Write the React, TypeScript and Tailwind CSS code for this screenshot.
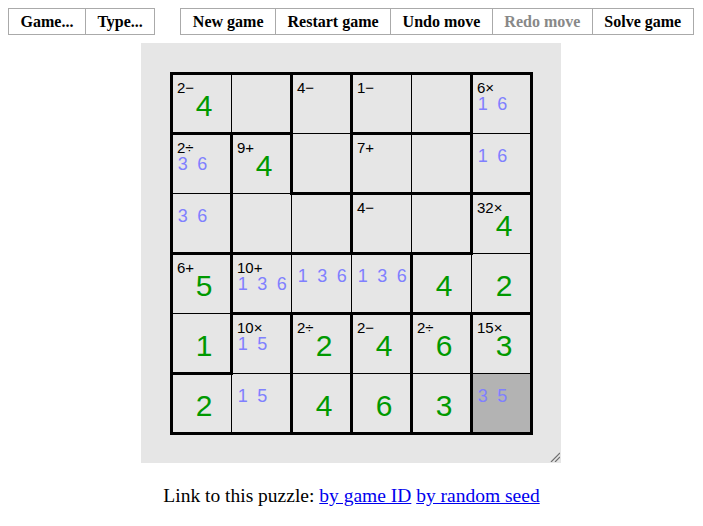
import React from "react";

// cage membership per row, one letter per cage
const CAGES = ["AABCCD", "EFBGGD", "EFFHHI", "JKKKII", "JLMNOP", "LLMNOP"];
const VALUES = ["4.....", ".4....", ".....4", "5...42", "1.2463", "2.463."];

const CLUES: Record<string, string> = {
  "0,0": "2−",
  "0,2": "4−",
  "0,3": "1−",
  "0,5": "6×",
  "1,0": "2÷",
  "1,1": "9+",
  "1,3": "7+",
  "2,3": "4−",
  "2,5": "32×",
  "3,0": "6+",
  "3,1": "10+",
  "4,1": "10×",
  "4,2": "2÷",
  "4,3": "2−",
  "4,4": "2÷",
  "4,5": "15×",
};

const MARKS: Record<string, number[]> = {
  "0,5": [1, 6],
  "1,0": [3, 6],
  "1,5": [1, 6],
  "2,0": [3, 6],
  "3,1": [1, 3, 6],
  "3,2": [1, 3, 6],
  "3,3": [1, 3, 6],
  "4,1": [1, 5],
  "5,1": [1, 5],
  "5,5": [3, 5],
};

function thinPath() {
  let d = "";
  for (let i = 1; i < 6; i++) {
    const p = i * 60 + 0.5;
    d += `M${p} 0V360M0 ${p}H360`;
  }
  return d;
}

function thickPath() {
  let d = "";
  for (let r = 0; r < 6; r++) {
    for (let c = 0; c < 6; c++) {
      if (c < 5 && CAGES[r][c] !== CAGES[r][c + 1]) {
        const x = (c + 1) * 60 + 0.5;
        d += `M${x} ${r * 60 + 0.5}V${(r + 1) * 60 + 0.5}`;
      }
      if (r < 5 && CAGES[r][c] !== CAGES[r + 1][c]) {
        const y = (r + 1) * 60 + 0.5;
        d += `M${c * 60 + 0.5} ${y}H${(c + 1) * 60 + 0.5}`;
      }
    }
  }
  return d;
}

function Cell({ r, c }: { r: number; c: number }) {
  const key = `${r},${c}`;
  const clue = CLUES[key];
  const marks = MARKS[key];
  const v = VALUES[r][c];
  const highlight = r === 5 && c === 5;

  return (
    <div className={`grid h-[60px] w-[60px] ${highlight ? "bg-[#b3b3b3]" : ""}`}>
      {clue && (
        <span className="col-start-1 row-start-1 ml-[6px] mt-[7px] self-start justify-self-start text-[15px] leading-[15px] text-black">
          {clue}
        </span>
      )}
      {marks && (
        <div
          className={`col-start-1 row-start-1 ml-[2px] flex self-start justify-self-start text-[18px] leading-[18px] text-[#8080ff] ${
            clue ? "mt-[22px]" : "mt-[14px]"
          }`}
        >
          {marks.map((m) => (
            <span key={m} className="w-[19.5px] text-center">
              {m}
            </span>
          ))}
        </div>
      )}
      {v !== "." && (
        <span className="col-start-1 row-start-1 ml-[6px] mt-[6px] self-center justify-self-center text-[30px] leading-[34px] text-[#009900]">
          {v}
        </span>
      )}
    </div>
  );
}

function MenuGroup({ items }: { items: { label: string; disabled?: boolean }[] }) {
  return (
    <div className="flex divide-x divide-[#aaaaaa] border border-[#aaaaaa]">
      {items.map((it) => (
        <span
          key={it.label}
          className={`px-[11.5px] py-[3px] leading-[19px] ${it.disabled ? "text-[#888888]" : "text-black"}`}
        >
          {it.label}
        </span>
      ))}
    </div>
  );
}

export default function App() {
  return (
    <div className="min-h-[526px] w-full bg-white pt-2">
      <div className="flex gap-[25px] pl-2 font-['Liberation_Serif',serif] text-[16px] font-bold">
        <MenuGroup items={[{ label: "Game..." }, { label: "Type..." }]} />
        <MenuGroup
          items={[
            { label: "New game" },
            { label: "Restart game" },
            { label: "Undo move" },
            { label: "Redo move", disabled: true },
            { label: "Solve game" },
          ]}
        />
      </div>

      <div className="relative ml-[141px] mt-2 h-[420px] w-[420px] bg-[#e6e6e6] p-[30px] font-['Liberation_Sans',sans-serif]">
        <div className="relative grid grid-cols-[repeat(6,60px)] grid-rows-[repeat(6,60px)]">
          {CAGES.map((row, r) =>
            row.split("").map((_, c) => <Cell key={`${r}-${c}`} r={r} c={c} />)
          )}
          <svg
            className="pointer-events-none absolute left-0 top-0 overflow-visible"
            width="360"
            height="360"
            shapeRendering="crispEdges"
          >
            <path d={thinPath()} stroke="#000" strokeWidth="1" fill="none" />
            <path d={thickPath()} stroke="#000" strokeWidth="3" strokeLinecap="square" fill="none" />
            <rect x="0.5" y="0.5" width="360" height="360" stroke="#000" strokeWidth="3" fill="none" />
          </svg>
        </div>
        <svg className="absolute bottom-[1px] right-[1px]" width="10" height="10">
          <path d="M1 10L10 1M5 10L10 5" stroke="#6f6f6f" strokeWidth="1.2" fill="none" />
        </svg>
      </div>

      <p className="mt-[18px] text-center font-['Liberation_Serif',serif] text-[19.5px] text-black">
        Link to this puzzle:{" "}
        <a href="#" className="text-[#0000ee] underline">
          by game ID
        </a>{" "}
        <a href="#" className="text-[#0000ee] underline">
          by random seed
        </a>
      </p>
    </div>
  );
}
